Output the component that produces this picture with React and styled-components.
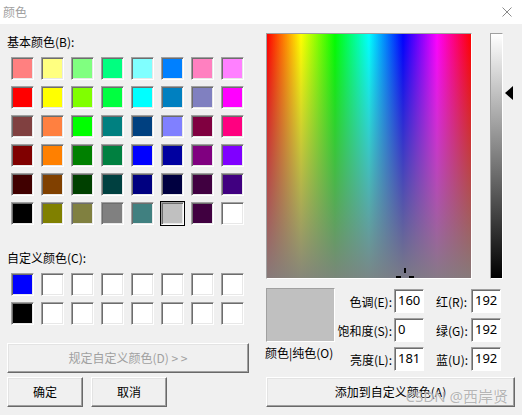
import styled, { createGlobalStyle } from 'styled-components';

const GlobalStyle = createGlobalStyle`
  html, body {
    margin: 0;
    padding: 0;
    background: #f0f0f0;
  }
  body {
    font-family: "Noto Sans CJK SC", "Noto Sans", sans-serif;
    font-size: 12px;
    color: #000;
  }
`;

const BASIC = [
  ['#FF8080', '#FFFF80', '#80FF80', '#00FF80', '#80FFFF', '#0080FF', '#FF80C0', '#FF80FF'],
  ['#FF0000', '#FFFF00', '#80FF00', '#00FF40', '#00FFFF', '#0080C0', '#8080C0', '#FF00FF'],
  ['#804040', '#FF8040', '#00FF00', '#008080', '#004080', '#8080FF', '#800040', '#FF0080'],
  ['#800000', '#FF8000', '#008000', '#008040', '#0000FF', '#0000A0', '#800080', '#8000FF'],
  ['#400000', '#804000', '#004000', '#004040', '#000080', '#000040', '#400040', '#400080'],
  ['#000000', '#808000', '#808040', '#808080', '#408080', '#C0C0C0', '#400040', '#FFFFFF'],
];

const CUSTOM = [
  ['#0000FF', '#fff', '#fff', '#fff', '#fff', '#fff', '#fff', '#fff'],
  ['#000000', '#fff', '#fff', '#fff', '#fff', '#fff', '#fff', '#fff'],
];

const Dialog = styled.div`
  width: 522px;
  height: 415px;
  background: #f0f0f0;
  position: relative;
  overflow: hidden;
`;

const TitleBar = styled.div`
  height: 24px;
  background: #fff;
  display: flex;
  align-items: center;
  justify-content: space-between;
  padding: 0 10px 0 3px;
  box-sizing: border-box;
`;

const Title = styled.span`
  color: #a0a0a0;
  font-size: 12px;
  line-height: 16px;
  margin-top: -1px;
`;

const Body = styled.div`
  display: flex;
  gap: 17px;
  padding-left: 7px;
`;

const LeftCol = styled.div`
  width: 242px;
  display: flex;
  flex-direction: column;
  padding-top: 10px;
`;

const Label = styled.div`
  font-size: 12px;
  line-height: 16px;
  height: 16px;
  white-space: nowrap;
  margin-top: ${(p) => p.$mt || 0}px;
`;

const SwatchGrid = styled.div`
  display: grid;
  grid-template-columns: repeat(8, 25px);
  grid-auto-rows: 25px;
  column-gap: 5px;
  row-gap: 4px;
  margin: 6px 0 0 3px;
`;

const Cell = styled.div`
  box-sizing: border-box;
  width: 25px;
  height: 25px;
  border: 1px solid ${(p) => (p.$selected ? '#000' : 'transparent')};
`;

const Swatch = styled.div`
  box-sizing: border-box;
  width: 23px;
  height: 23px;
  background: ${(p) => p.$color};
  border: 1px solid;
  border-color: #a0a0a0 #fff #fff #a0a0a0;
  box-shadow: inset 1px 1px #6d6d6d, inset -1px -1px #e8e8e8;
`;

const Button = styled.button`
  box-sizing: border-box;
  height: 30px;
  width: ${(p) => p.$w}px;
  margin: 0;
  padding: 0;
  background: #f0f0f0;
  border: 1px solid;
  border-color: #fff #696969 #696969 #fff;
  box-shadow: inset -1px -1px #a0a0a0, inset 1px 1px #e3e3e3;
  font-family: "Noto Sans CJK SC", "Noto Sans", sans-serif;
  font-size: 12px;
  line-height: 16px;
  color: ${(p) => (p.disabled ? '#a0a0a0' : '#000')};
  white-space: nowrap;
`;

const DefineRow = styled.div`
  margin-top: 17px;
`;

const ButtonRow = styled.div`
  display: flex;
  gap: 8px;
  margin-top: 4px;
`;

const RightCol = styled.div`
  width: 248px;
  display: flex;
  flex-direction: column;
  padding-top: 9px;
`;

const PickerRow = styled.div`
  display: flex;
  height: 246px;
`;

const Spectrum = styled.div`
  position: relative;
  box-sizing: border-box;
  width: 206px;
  height: 246px;
  overflow: hidden;
  border: 1px solid;
  border-color: #a0a0a0 #fff #fff #a0a0a0;
  background:
    linear-gradient(to bottom, rgba(128, 128, 128, 0), rgba(128, 128, 128, 0.95)),
    linear-gradient(to right, #f00 0%, #ff0 16.67%, #0f0 33.33%, #0ff 50%, #00f 66.67%, #f0f 83.33%, #f00 100%);
`;

const Crosshair = styled.svg`
  position: absolute;
  width: 20px;
  height: 20px;
`;

const LumTrack = styled.div`
  position: relative;
  margin-left: 18px;
  width: 24px;
`;

const LumBar = styled.div`
  box-sizing: border-box;
  width: 13px;
  height: 246px;
  border: 1px solid;
  border-color: #a0a0a0 #fff #fff #a0a0a0;
  background: linear-gradient(to bottom, #fff, #000);
`;

const LumArrow = styled.div`
  position: absolute;
  left: 15px;
  width: 0;
  height: 0;
  border-top: 7px solid transparent;
  border-bottom: 7px solid transparent;
  border-right: 8px solid #000;
`;

const InfoRow = styled.div`
  display: flex;
  margin-top: 9px;
`;

const PreviewCol = styled.div`
  width: 69px;
  display: flex;
  flex-direction: column;
`;

const Preview = styled.div`
  box-sizing: border-box;
  width: 69px;
  height: 54px;
  background: #c0c0c0;
  border: 1px solid;
  border-color: #a0a0a0 #fff #fff #a0a0a0;
`;

const PreviewLabel = styled.div`
  margin: 3px 0 0 -1px;
  font-size: 12px;
  line-height: 16px;
  white-space: nowrap;
`;

const Fields = styled.div`
  display: grid;
  grid-template-columns: 57px 30px 43px 30px;
  grid-auto-rows: 24px;
  column-gap: 2px;
  row-gap: 5px;
  margin-top: 1px;
`;

const FieldLabel = styled.label`
  display: flex;
  align-items: center;
  justify-content: ${(p) => (p.$left ? 'flex-start' : 'flex-end')};
  padding-left: ${(p) => (p.$left ? 10 : 0)}px;
  font-size: 12px;
  white-space: nowrap;
`;

const Field = styled.div`
  box-sizing: border-box;
  width: 30px;
  height: 24px;
  background: #fff;
  border: 1px solid;
  border-color: #a0a0a0 #fff #fff #a0a0a0;
  box-shadow: inset 1px 1px #6d6d6d;
  padding: 0 0 0 3px;
  font-family: "Noto Sans", sans-serif;
  font-size: 13px;
  line-height: 21px;
`;

const AddRow = styled.div`
  margin-top: 6px;
`;

const Watermark = styled.div`
  position: absolute;
  right: 14px;
  bottom: 9px;
  font-family: "Noto Sans", "Noto Sans CJK SC", sans-serif;
  font-size: 15px;
  line-height: 20px;
  color: rgba(150, 150, 150, 0.7);
  text-shadow: 0 0 1px #fff;
  pointer-events: none;
`;

const CloseIcon = () => (
  <svg width="10" height="10" viewBox="0 0 10 10">
    <path d="M0.5 0.5 L9.5 9.5 M9.5 0.5 L0.5 9.5" stroke="#8a8a8a" strokeWidth="1" fill="none" />
  </svg>
);

const HUE = 160;
const SAT = 0;
const LUM = 181;

export default function App() {
  const cx = Math.round((HUE / 239) * 206);
  const cy = Math.round((1 - SAT / 240) * 244) - 1;
  const arrowTop = Math.round((1 - LUM / 240) * 246) - 7;

  return (
    <Dialog>
      <GlobalStyle />
      <TitleBar>
        <Title>颜色</Title>
        <CloseIcon />
      </TitleBar>
      <Body>
        <LeftCol>
          <Label>基本颜色(B):</Label>
          <SwatchGrid>
            {BASIC.flatMap((row, r) =>
              row.map((c, i) => (
                <Cell key={`${r}-${i}`} $selected={r === 5 && i === 5}>
                  <Swatch $color={c} />
                </Cell>
              ))
            )}
          </SwatchGrid>
          <Label $mt={24}>自定义颜色(C):</Label>
          <SwatchGrid>
            {CUSTOM.flatMap((row, r) =>
              row.map((c, i) => (
                <Cell key={`c${r}-${i}`}>
                  <Swatch $color={c} />
                </Cell>
              ))
            )}
          </SwatchGrid>
          <DefineRow>
            <Button $w={242} disabled>
              规定自定义颜色(D) &gt; &gt;
            </Button>
          </DefineRow>
          <ButtonRow>
            <Button $w={76}>确定</Button>
            <Button $w={76}>取消</Button>
          </ButtonRow>
        </LeftCol>
        <RightCol>
          <PickerRow>
            <Spectrum>
              <Crosshair style={{ left: cx - 10, top: cy - 10 }} viewBox="0 0 20 20">
                <path
                  d="M10 1 V6 M10 14 V19 M1 10 H6 M14 10 H19"
                  stroke="#000"
                  strokeWidth="2"
                  fill="none"
                />
              </Crosshair>
            </Spectrum>
            <LumTrack>
              <LumBar />
              <LumArrow style={{ top: arrowTop }} />
            </LumTrack>
          </PickerRow>
          <InfoRow>
            <PreviewCol>
              <Preview />
              <PreviewLabel>颜色|纯色(O)</PreviewLabel>
            </PreviewCol>
            <Fields>
              <FieldLabel>色调(E):</FieldLabel>
              <Field>160</Field>
              <FieldLabel $left>红(R):</FieldLabel>
              <Field>192</Field>
              <FieldLabel>饱和度(S):</FieldLabel>
              <Field>0</Field>
              <FieldLabel $left>绿(G):</FieldLabel>
              <Field>192</Field>
              <FieldLabel>亮度(L):</FieldLabel>
              <Field>181</Field>
              <FieldLabel $left>蓝(U):</FieldLabel>
              <Field>192</Field>
            </Fields>
          </InfoRow>
          <AddRow>
            <Button $w={249}>添加到自定义颜色(A)</Button>
          </AddRow>
        </RightCol>
      </Body>
      <Watermark>CSDN @西岸贤</Watermark>
    </Dialog>
  );
}
